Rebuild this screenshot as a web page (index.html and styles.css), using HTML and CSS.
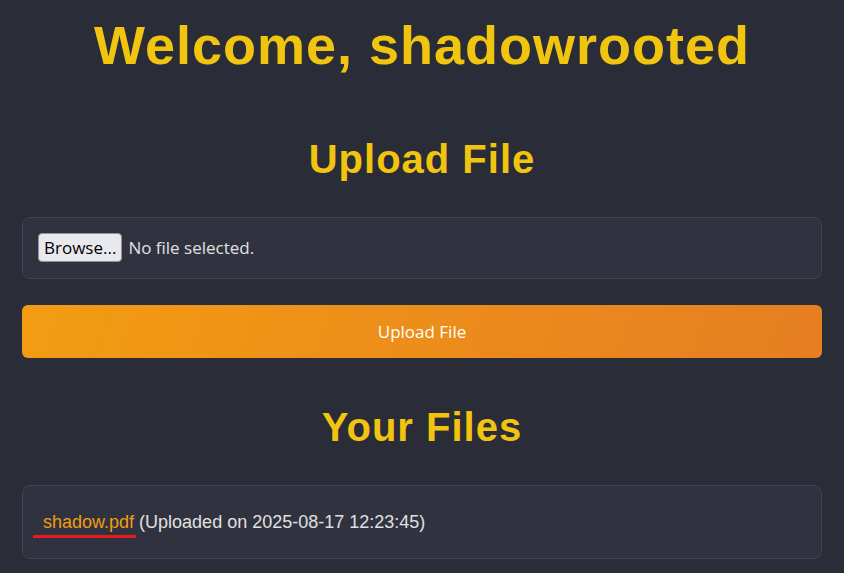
FILE: index.html
```html
<!DOCTYPE html>
<html>
<head>
<meta charset="utf-8">
<link rel="stylesheet" href="styles.css">
</head>
<body>
<div class="container">
  <h1 class="title">Welcome, shadowrooted</h1>
  <h2 class="section-title">Upload File</h2>
  <form class="upload-form">
    <div class="card file-card">
      <span class="file-input">
        <button type="button" class="browse-btn">Browse...</button>
        <span class="file-status">No file selected.</span>
      </span>
    </div>
    <button type="button" class="upload-btn">Upload File</button>
  </form>
  <h2 class="section-title files-title">Your Files</h2>
  <div class="card files-card">
    <span class="file-entry"><a class="file-link" href="#">shadow.pdf</a> (Uploaded on 2025-08-17 12:23:45)</span>
  </div>
</div>
</body>
</html>
```
FILE: styles.css
```css
html, body {
  margin: 0;
  padding: 0;
}
body {
  background: #2a2c37;
  font-family: "Open Sans", "Noto Sans", sans-serif;
  color: #e0e0e0;
}
.container {
  max-width: 800px;
  margin: 0 auto;
  padding: 0 22px;
}
.title {
  font-family: "Liberation Sans", Arial, sans-serif;
  font-weight: bold;
  font-size: 54px;
  letter-spacing: 1px;
  color: #f1c40f;
  text-align: center;
  margin: 15px 0 0;
  line-height: 60px;
}
.section-title {
  font-family: "Liberation Sans", Arial, sans-serif;
  font-weight: bold;
  font-size: 40px;
  letter-spacing: 1px;
  color: #f1c40f;
  text-align: center;
  margin: 60px 0 34px;
  line-height: 48px;
}
.files-title {
  margin-top: 45px;
}
.upload-form {
  display: flex;
  flex-direction: column;
  gap: 26px;
}
.card {
  background: #30333f;
  border: 1px solid #41444f;
  border-radius: 8px;
}
.file-card {
  padding: 15px 15px 16px;
}
.file-input {
  display: flex;
  align-items: center;
  gap: 6px;
}
.browse-btn {
  font-family: "Open Sans", "Noto Sans", sans-serif;
  font-size: 17px;
  color: #000;
  background: #e9e9ed;
  border: 1px solid #8f8f9d;
  border-radius: 4px;
  padding: 1px 5px;
  height: 29px;
  line-height: 22px;
}
.file-status {
  font-size: 17px;
  color: #e0e0e0;
}
.upload-btn {
  height: 53px;
  border: none;
  border-radius: 6px;
  background: linear-gradient(110deg, #f39c12, #e67e22);
  color: #fff;
  font-family: "Open Sans", "Noto Sans", sans-serif;
  font-size: 17px;
}
.files-card {
  padding: 24px 20px;
  font-family: "Liberation Sans", Arial, sans-serif;
  font-size: 18px;
  line-height: 24px;
}
.file-entry {
  color: #e0e0e0;
}
.file-link {
  position: relative;
  color: #f39c12;
  text-decoration: none;
}
.file-link::after {
  content: "";
  position: absolute;
  left: -10px;
  right: -2px;
  bottom: -6px;
  height: 3px;
  background: #e81c1c;
}
```
